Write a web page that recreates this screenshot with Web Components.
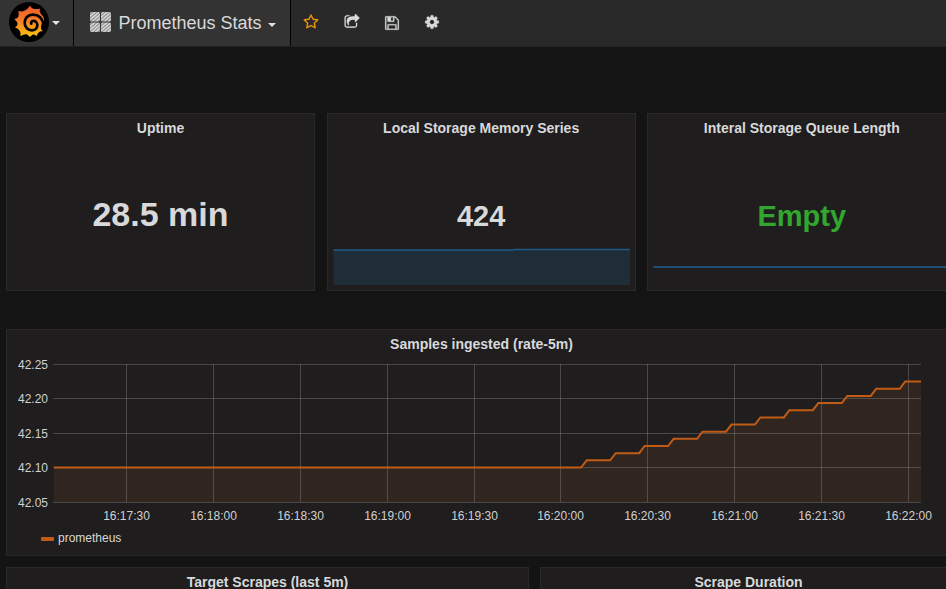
<!DOCTYPE html>
<html lang="en">
<head>
<meta charset="utf-8">
<title>Prometheus Stats</title>
<style>
html,body{margin:0;height:100%;overflow:hidden;background:#141414;color:#d8d9da;font-family:"Liberation Sans",Arial,sans-serif}
</style>
</head>
<body>
<stats-dashboard></stats-dashboard>
<script>
const define = (name, html) => customElements.define(name, class extends HTMLElement {
  constructor() {
    super();
    this.attachShadow({mode: 'open'});
  }
  connectedCallback() {
    const t = document.createElement('template');
    t.innerHTML = typeof html === 'function' ? html(this) : html;
    this.shadowRoot.replaceChildren(t.content.cloneNode(true));
  }
});

const ICONS = {
  star: 'M1201 1004l306-297-422-62-189-382-189 382-422 62 306 297-73 421 378-199 377 199zm527-357q0 22-26 48l-363 354 86 500q1 7 1 20 0 50-41 50-19 0-40-12l-449-236-449 236q-22 12-40 12-21 0-31.5-14.5t-10.5-35.5q0-6 2-20l86-500-364-354q-25-27-25-48 0-37 56-46l502-73 225-455q19-41 49-41t49 41l225 455 502 73q56 9 56 46z',
  share: 'M1472 989v259q0 119-84.500 203.500t-203.500 84.500h-832q-119 0-203.500-84.500t-84.500-203.500v-832q0-119 84.500-203.500t203.500-84.500h255q13 0 22.500 9.500t9.500 22.500q0 27-26 32-77 26-133 60-10 4-16 4h-112q-66 0-113 47t-47 113v832q0 66 47 113t113 47h832q66 0 113-47t47-113v-214q0-19 18-29 28-13 54-37 16-16 35-8 21 9 21 29zm237-496l-384 384q-18 19-45 19-12 0-25-5-39-17-39-59v-192h-160q-323 0-438 131-119 137-74 473 3 23-20 34-8 2-12 2-16 0-26-13-10-14-21-31t-39.500-68.500-49.500-99.500-38.500-114-17.500-122q0-49 3.500-91t14-90 28-88 47-81.500 68.500-74 94.500-61.500 124.500-48.500 159.500-30.500 196.500-11h160v-192q0-42 39-59 13-5 25-5 26 0 45 19l384 384q19 19 19 45t-19 45z',
  save: 'M512 1536h768v-384h-768v384zm896 0h128v-896q0-14-10-38.500t-20-34.500l-281-281q-10-10-34-20t-39-10v416q0 40-28 68t-68 28h-576q-40 0-68-28t-28-68v-416h-128v1280h128v-416q0-40 28-68t68-28h832q40 0 68 28t28 68v416zm-384-928v-320q0-13-9.500-22.500t-22.500-9.500h-192q-13 0-22.500 9.500t-9.500 22.500v320q0 13 9.500 22.500t22.500 9.500h192q13 0 22.500-9.500t9.500-22.500zm640 32v928q0 40-28 68t-68 28h-1344q-40 0-68-28t-28-68v-1344q0-40 28-68t68-28h928q40 0 88 20t76 48l280 280q28 28 48 76t20 88z',
  cog: 'M1152 896q0-106-75-181t-181-75-181 75-75 181 75 181 181 75 181-75 75-181zm512-109v222q0 12-8 23t-20 13l-185 28q-19 54-39 91 35 50 107 138 10 12 10 25t-9 23q-27 37-99 108t-94 71q-12 0-26-9l-138-108q-44 23-91 38-16 136-29 186-7 28-36 28h-222q-14 0-24.500-8.500t-11.500-21.500l-28-184q-49-16-90-37l-141 107q-10 9-25 9-14 0-25-11-126-114-165-168-7-10-7-23 0-12 8-23 15-21 51-66.500t54-70.500q-27-50-41-99l-183-27q-13-2-21-12.500t-8-23.500v-222q0-12 8-23t19-13l186-28q14-46 39-92-40-57-107-138-10-12-10-24 0-10 9-23 26-36 98.500-107.500t94.500-71.500q13 0 26 10l138 107q44-23 91-38 16-136 29-186 7-28 36-28h222q14 0 24.500 8.500t11.500 21.500l28 184q49 16 90 37l142-107q9-9 24-9 13 0 25 10 129 119 165 170 7 8 7 22 0 12-8 23-15 21-51 66.500t-54 70.500q26 50 41 98l183 28q13 2 21 12.500t8 23.500z'
};

define('tool-icon', el => `
<style>:host{display:block;width:16px;height:16px}svg{display:block;fill:currentColor;stroke:currentColor;stroke-width:25}</style>
<svg width="16" height="16" viewBox="0 0 1792 1792"><path d="${ICONS[el.getAttribute('name')]}"/></svg>`);

define('brand-logo', `
<style>:host{display:block;width:40px;height:40px}svg{display:block}</style>
<svg width="40" height="40" viewBox="27 6 120 120">
<defs><linearGradient id="g" x1="0" y1="18" x2="0" y2="111" gradientUnits="userSpaceOnUse"><stop offset="0" stop-color="#f05a2b"/><stop offset=".45" stop-color="#f47b29"/><stop offset="1" stop-color="#fcc40e"/></linearGradient></defs>
<circle cx="87" cy="66" r="60" fill="#000"/>
<path fill="url(#g)" d="M90 17Q95 26 102 27Q110 28 120 26Q117 34 121 39Q124 44 129 49Q133 55 131 64L125 72Q122 79 123 86L128 94Q120 93 117 97Q112 101 110 108Q103 103 98 104L89 111Q86 106 80 103Q73 102 61 108Q63 97 59 92Q55 86 45 82Q53 77 53 71Q52 66 43 57Q52 55 55 50Q58 45 55 33Q66 36 73 32Q83 28 90 17Z"/>
<path fill="none" stroke="#000" stroke-width="8" stroke-linecap="round" d="M131 74C127 54 114 44 99 44C83 44 74 55 74 68C74 82 84 91 96 91C107 91 113 83 112 74C111 66 105 62 99 63C94 64 92 68 94 71"/>
</svg>`);

define('grid-icon', `
<style>:host{display:block;width:21px;height:21px}svg{display:block}</style>
<svg width="21" height="21"><defs><pattern id="h" width="2.600" height="2.600" patternUnits="userSpaceOnUse" patternTransform="rotate(50)"><rect width="2.600" height="2.600" fill="#8c8c8c"/><rect width="1.400" height="2.600" fill="#dedede"/></pattern></defs>
<g fill="url(#h)"><rect width="10" height="9.500" rx="1.500"/><rect x="11" width="10" height="9.500" rx="1.500"/><rect y="10.500" width="10" height="9.500" rx="1.500"/><rect x="11" y="10.500" width="10" height="9.500" rx="1.500"/></g></svg>`);

define('nav-bar', `
<style>
:host{display:flex;height:47px;background:#292929;box-sizing:border-box;border-bottom:1px solid #242424}
.brand,.title{display:flex;background:#333;border-right:1px solid #000;box-sizing:border-box}
.brand{width:74px;padding:2px 0 0 9px}
.title{width:217px;padding-left:16px;font-size:18px;line-height:46px;white-space:nowrap}
grid-icon{margin:12px 7.500px 0 0}
.caret{border:4px solid transparent;border-top-color:#e3e3e3;border-bottom:0;width:0;height:0;margin:19px 0 0 3px}
.title .caret{margin:23px 0 0 6px}
.tools{display:flex;gap:24.300px;padding:14px 0 0 12px;color:#d8d9da}
.tools [name=share]{margin:0 -.5px 0 .5px}
.tools [name=save]{margin:.5px -.3px 0 .3px}
.fav{color:#f79c14}
</style>
<div class="brand"><brand-logo></brand-logo><i class="caret"></i></div>
<div class="title"><grid-icon></grid-icon><span>Prometheus Stats</span><i class="caret"></i></div>
<div class="tools"><tool-icon class="fav" name="star"></tool-icon><tool-icon name="share"></tool-icon><tool-icon name="save"></tool-icon><tool-icon name="cog"></tool-icon></div>`);

define('dash-panel', el => `
<style>
:host{display:flex;flex-direction:column;box-sizing:border-box;border:1px solid #292929;background:#1f1d1e;min-width:0}
h2{margin:0;font-size:14px;line-height:17px;padding-top:6px;text-align:center;font-weight:bold}
</style><h2>${el.getAttribute('heading')}</h2><slot></slot>`);

define('single-stat', `
<style>:host{display:block;text-align:center;font-weight:bold;font-size:29px;line-height:34px;padding-top:62px}</style><slot></slot>`);

define('spark-line', el => `
<style>:host{display:block;padding:15px 4px 0}svg{display:block}</style>
<svg width="299" height="38">${el.hasAttribute('flat')
  ? '<path d="M1.500 19H299" stroke="#1f4f75" stroke-width="2"/>'
  : '<path d="M1.500 2H298V37H1.500Z" fill="#1f2d38"/><path d="M1.500 2H181L183 1.500H298" fill="none" stroke="#1f5a8a" stroke-width="1.600"/>'}</svg>`);

define('rate-chart', () => {
  const ys = [364, 398, 433, 467, 502], xs = [126, 213, 300, 387, 474, 560, 647, 734, 821, 908];
  const times = ['16:17:30','16:18:00','16:18:30','16:19:00','16:19:30','16:20:00','16:20:30','16:21:00','16:21:30','16:22:00'];
  let line = 'M54 467.500H581';
  for (let i = 0; i < 12; i++) {
    const y = (467.5 - 7.16 * (i + 1)).toFixed(2);
    line += `L${(586.7 + 28.95 * i).toFixed(1)} ${y}H${i < 11 ? (610.2 + 28.95 * i).toFixed(1) : 921}`;
  }
  return `
<style>:host{display:block}svg{display:block}text{font-size:12px;fill:#d0d1d2}</style>
<svg width="940" height="174" viewBox="7 353 940 174">
<path d="${line}V502H54Z" fill="#e0752d" fill-opacity=".09"/>
<path d="${ys.map(y => `M53 ${y + .5}H921`).join('')}${xs.map(x => `M${x + .5} 364V502`).join('')}" stroke="#c8c8c8" stroke-opacity=".25"/>
<path d="${line}" fill="none" stroke="#c15c17" stroke-width="2"/>
${ys.map((y, i) => `<text x="48" y="${y + 5}" text-anchor="end">${(42.25 - i * .05).toFixed(2)}</text>`).join('')}
${xs.map((x, i) => `<text x="${x + .5}" y="520" text-anchor="middle">${times[i]}</text>`).join('')}
</svg>`;
});

define('series-key', `
<style>:host{display:flex;align-items:center;gap:4px;padding:4px 0 0 34px;font-size:12px;line-height:14px}i{width:13px;height:4px;border-radius:1px;background:#c15c17;margin-top:1px}</style>
<i></i><span><slot></slot></span>`);

define('stats-dashboard', `
<style>
:host{display:block;width:946px;height:589px;overflow:hidden}
main{width:951px;padding:66px 0 0 6px}
.row{display:grid;margin-bottom:11px}
.stats{grid-template-columns:309px 309px 309px;column-gap:11.670px;grid-template-rows:178px;margin-bottom:38px}
.graph{grid-template-rows:227px}
.last{grid-template-columns:523px 417px;column-gap:11px;grid-template-rows:178px}
.big{font-size:34px;padding-top:60px}
.ok{color:#32a62d}
</style>
<nav-bar></nav-bar>
<main>
<div class="row stats">
<dash-panel heading="Uptime"><single-stat class="big">28.5 min</single-stat></dash-panel>
<dash-panel heading="Local Storage Memory Series"><single-stat>424</single-stat><spark-line></spark-line></dash-panel>
<dash-panel heading="Interal Storage Queue Length"><single-stat class="ok">Empty</single-stat><spark-line flat></spark-line></dash-panel>
</div>
<div class="row graph"><dash-panel heading="Samples ingested (rate-5m)"><rate-chart></rate-chart><series-key>prometheus</series-key></dash-panel></div>
<div class="row last"><dash-panel heading="Target Scrapes (last 5m)"></dash-panel><dash-panel heading="Scrape Duration"></dash-panel></div>
</main>`);
</script>
</body>
</html>
